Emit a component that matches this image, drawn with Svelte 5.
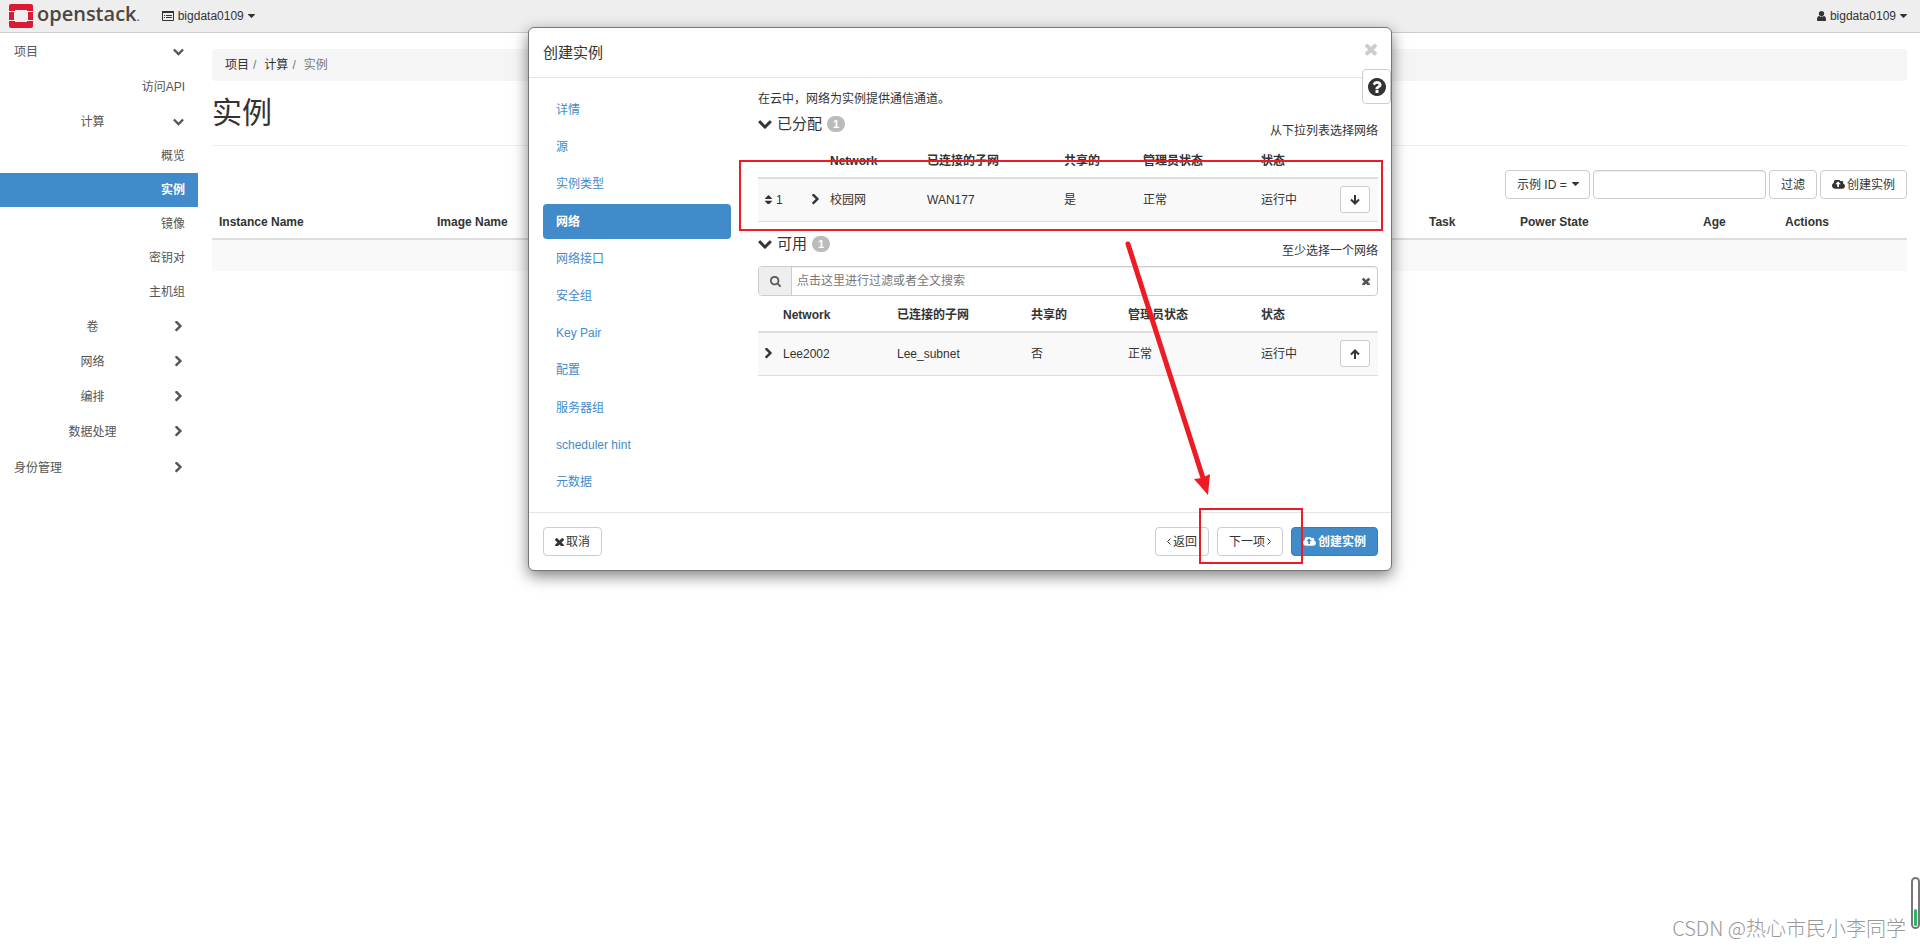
<script>
    const panels = [
        { name: '项目', kind: 'top', open: true },
        { name: '访问API', kind: 'leaf' },
        { name: '计算', kind: 'group', open: true },
        { name: '概览', kind: 'leaf' },
        { name: '实例', kind: 'leaf', active: true },
        { name: '镜像', kind: 'leaf' },
        { name: '密钥对', kind: 'leaf' },
        { name: '主机组', kind: 'leaf' },
        { name: '卷', kind: 'group' },
        { name: '网络', kind: 'group' },
        { name: '编排', kind: 'group' },
        { name: '数据处理', kind: 'group' },
        { name: '身份管理', kind: 'top' }
    ];

    const steps = ['详情', '源', '实例类型', '网络', '网络接口', '安全组', 'Key Pair', '配置', '服务器组', 'scheduler hint', '元数据'];
    let step = $state('网络');

    const columns = ['Network', '已连接的子网', '共享的', '管理员状态', '状态'];
    const allocated = [{ order: 1, cells: ['校园网', 'WAN177', '是', '正常', '运行中'] }];
    const available = [{ cells: ['Lee2002', 'Lee_subnet', '否', '正常', '运行中'] }];
    const allocatedWidths = [47, 18, 97, 137, 79, 118, 79, 45];
    const availableWidths = [18, 114, 134, 97, 133, 79, 45];

    let filter = $state('');
    let query = $state('');

    const icons = {
        down: 'M1683 808l-742 741q-19 19-45 19t-45-19l-742-741q-19-19-19-45.5t19-45.5l166-165q19-19 45-19t45 19l531 531 531-531q19-19 45-19t45 19l166 165q19 19 19 45.5t-19 45.5z',
        right: 'M1363 877l-742 742q-19 19-45 19t-45-19l-166-166q-19-19-19-45t19-45l531-531-531-531q-19-19-19-45t19-45l166-166q19-19 45-19t45 19l742 742q19 19 19 45t-19 45z',
        times: 'M1490 1322q0 40-28 68l-136 136q-28 28-68 28t-68-28l-294-294-294 294q-28 28-68 28t-68-28l-136-136q-28-28-28-68t28-68l294-294-294-294q-28-28-28-68t28-68l136-136q28-28 68-28t68 28l294 294 294-294q28-28 68-28t68 28l136 136q28 28 28 68t-28 68l-294 294 294 294q28 28 28 68z',
        caret: 'M1408 704q0 26-19 45l-448 448q-19 19-45 19t-45-19l-448-448q-19-19-19-45t19-45 45-19h896q26 0 45 19t19 45z',
        sort: 'M1408 1088q0 26-19 45l-448 448q-19 19-45 19t-45-19l-448-448q-19-19-19-45t19-45 45-19h896q26 0 45 19t19 45zm0-384q0 26-19 45t-45 19h-896q-26 0-45-19t-19-45 19-45l448-448q19-19 45-19t45 19l448 448q19 19 19 45z',
        search: 'M1216 832q0-185-131.5-316.5t-316.5-131.5-316.5 131.5-131.5 316.5 131.5 316.5 316.5 131.5 316.5-131.5 131.5-316.5zm512 832q0 52-38 90t-90 38q-54 0-90-38l-343-342q-179 124-399 124-143 0-273.5-55.5t-225-150-150-225-55.5-273.5 55.5-273.5 150-225 225-150 273.5-55.5 273.5 55.5 225 150 150 225 55.5 273.5q0 220-124 399l343 343q37 37 37 90z',
        help: 'M1024 1376v-192q0-14-9-23t-23-9h-192q-14 0-23 9t-9 23v192q0 14 9 23t23 9h192q14 0 23-9t9-23zm256-672q0-88-55.5-163t-138.5-116-170-41q-243 0-371 213-15 24 8 42l132 100q7 6 19 6 16 0 25-12 53-68 86-92 34-24 86-24 48 0 85.5 26t37.5 59q0 38-20 61t-68 45q-63 28-115.5 86.5t-52.5 125.5v36q0 14 9 23t23 9h192q14 0 23-9t9-23q0-19 21.5-49.5t54.5-49.5q32-18 49-28.5t46-35 44.5-48 28-60.5 12.5-81zm384 192q0 209-103 385.5t-279.5 279.5-385.5 103-385.5-103-279.5-279.5-103-385.5 103-385.5 279.5-279.5 385.5-103 385.5 103 279.5 279.5 103 385.5z',
        cloud: 'M1280 864q0-14-9-23l-352-352q-9-9-23-9t-23 9l-351 351q-10 12-10 24 0 14 9 23t23 9h224v352q0 13 9.500 22.500t22.500 9.500h192q13 0 22.500-9.500t9.500-22.500v-352h224q13 0 22.500-9.500t9.500-22.500zm640 288q0 159-112.500 271.500t-271.500 112.500h-1088q-185 0-316.500-131.500t-131.500-316.500q0-130 70-240t188-165q-2-30-2-43 0-212 150-362t362-150q156 0 285.500 87t188.500 231q71-62 166-62 106 0 181 75t75 181q0 76-41 138 130 31 213.500 135.500t83.500 238.500z',
        user: 'M1536 1399q0 109-62.5 187t-150.5 78h-854q-88 0-150.5-78t-62.5-187q0-85 8.5-160.5t31.5-152 58.5-131 94-89 134.5-34.5q131 128 313 128t313-128q76 0 134.5 34.5t94 89 58.5 131 31.5 152 8.5 160.5zm-256-887q0 159-112.5 271.5t-271.5 112.5-271.5-112.5-112.5-271.5 112.5-271.5 271.5-112.5 271.5 112.5 112.5 271.5z'
    };
    // [viewBox, width] of each glyph at the 12px text size
    const boxes = {
        down: ['56 256 1680 1480', 11],
        right: ['346 88 1036 1616', 7],
        times: ['302 238 1188 1316', 9],
        caret: ['384 640 1024 576', 7],
        sort: ['384 192 1024 1408', 7],
        search: ['64 128 1664 1664', 11],
        help: ['128 128 1536 1536', 18],
        cloud: ['0 256 1920 1280', 13],
        user: ['256 128 1280 1536', 9]
    };
</script>

{#snippet icon(name, size)}
    <svg class="icon" viewBox={boxes[name][0]} width={size || boxes[name][1]} aria-hidden="true"><path d={icons[name]} /></svg>
{/snippet}

{#snippet networkTable(rows, widths, ordered)}
    <table class="networks">
        <colgroup>
            {#each widths as w}<col style="width:{w}px">{/each}
        </colgroup>
        <thead>
            <tr>
                {#if ordered}<th></th>{/if}
                <th></th>
                {#each columns as column}<th>{column}</th>{/each}
                <th></th>
            </tr>
        </thead>
        <tbody>
            {#each rows as row}
                <tr>
                    {#if ordered}<td><span class="order">{@render icon('sort')}{row.order}</span></td>{/if}
                    <td class="expand">{@render icon('right')}</td>
                    {#each row.cells as cell}<td>{cell}</td>{/each}
                    <td>
                        <button class="btn move" aria-label={ordered ? 'down' : 'up'}>
                            <svg width="10" height="10" viewBox="0 0 10 10" fill="none" stroke="currentColor" stroke-width="2">
                                {#if ordered}
                                    <path d="M5 0v9M1 4.500l4 4 4-4" />
                                {:else}
                                    <path d="M5 10v-9M1 5.500l4-4 4 4" />
                                {/if}
                            </svg>
                        </button>
                    </td>
                </tr>
            {/each}
        </tbody>
    </table>
{/snippet}

<header class="topbar">
    <a class="brand" href="#home">
        <svg width="24" height="24" viewBox="0 0 24 24">
            <path fill="#da1a32" d="M2 0h20q2 0 2 2v5h-6v-1h-12v1h-6v-5q0-2 2-2zM0 8h5v8h-5zM19 8h5v8h-5zM0 17h6v1h12v-1h6v5q0 2-2 2h-20q-2 0-2-2z" />
        </svg>
        <span>openstack<small>.</small></span>
    </a>
    <button class="menu">
        <svg width="12" height="10" viewBox="0 0 12 10" fill="none" stroke="currentColor">
            <path d="M.5 1v8.500h11v-8.500M2 4.500h1M4 4.500h6M2 6.500h1M4 6.500h6" />
            <path d="M0 1h12" stroke-width="2" />
        </svg>
        bigdata0109
        {@render icon('caret')}
    </button>
    <button class="menu user">
        {@render icon('user')}
        bigdata0109
        {@render icon('caret')}
    </button>
</header>

<div class="page">
    <nav class="sidebar">
        {#each panels as panel}
            <a href="#panel" class={panel.kind} class:active={panel.active}>
                <span>{panel.name}</span>
                {#if panel.kind !== 'leaf'}
                    <i>{@render icon(panel.open ? 'down' : 'right')}</i>
                {/if}
            </a>
        {/each}
    </nav>

    <main>
        <ol class="breadcrumb">
            <li><a href="#project">项目</a></li>
            <li><a href="#compute">计算</a></li>
            <li>实例</li>
        </ol>
        <h1>实例</h1>
        <form class="actions" onsubmit={(e) => e.preventDefault()}>
            <div class="select">
                <select class="btn" aria-label="filter">
                    <option>示例 ID =</option>
                </select>
                {@render icon('caret')}
            </div>
            <input type="text" aria-label="value" bind:value={filter}>
            <button class="btn">过滤</button>
            <button class="btn" type="button">{@render icon('cloud')} 创建实例</button>
        </form>
        <table class="instances">
            <thead>
                <tr>
                    <th class="c-name">Instance Name</th>
                    <th>Image Name</th>
                    <th class="c-task">Task</th>
                    <th class="c-power">Power State</th>
                    <th class="c-age">Age</th>
                    <th class="c-actions">Actions</th>
                </tr>
            </thead>
            <tbody>
                <tr><td colspan="6"></td></tr>
            </tbody>
        </table>
    </main>
</div>

<div class="modal" role="dialog" aria-labelledby="modal-title">
    <div class="modal-header">
        <h2 id="modal-title">创建实例</h2>
        <button class="close" aria-label="close">{@render icon('times', 12)}</button>
    </div>
    <button class="btn help" aria-label="help">{@render icon('help')}</button>
    <div class="modal-body">
        <nav class="steps">
            {#each steps as name}
                <a href="#step" class:active={name === step} onclick={() => (step = name)}>{name}</a>
            {/each}
        </nav>
        <div class="content">
            <p>在云中，网络为实例提供通信通道。</p>
            <div class="title">
                <h3>{@render icon('down', 14)} 已分配 <span class="badge">1</span></h3>
                <span class="hint">从下拉列表选择网络</span>
            </div>
            {@render networkTable(allocated, allocatedWidths, true)}
            <div class="title second">
                <h3>{@render icon('down', 14)} 可用 <span class="badge">1</span></h3>
                <span class="hint">至少选择一个网络</span>
            </div>
            <div class="search">
                <label for="query">{@render icon('search')}</label>
                <input id="query" type="text" placeholder="点击这里进行过滤或者全文搜索" bind:value={query}>
                <button aria-label="clear" onclick={() => (query = '')}>{@render icon('times', 8)}</button>
            </div>
            {@render networkTable(available, availableWidths, false)}
        </div>
    </div>
    <div class="modal-footer">
        <button class="btn cancel">{@render icon('times')} 取消</button>
        <button class="btn">
            <svg width="4" height="7" viewBox="0 0 4 7" fill="none" stroke="currentColor"><path d="M3.500 .5l-3 3 3 3" /></svg>
            返回
        </button>
        <button class="btn">
            下一项
            <svg width="4" height="7" viewBox="0 0 4 7" fill="none" stroke="currentColor"><path d="M.5 .5l3 3-3 3" /></svg>
        </button>
        <button class="btn primary">{@render icon('cloud')} 创建实例</button>
    </div>

    <!-- red marks drawn over the dialog -->
    <svg class="marks" width="864" height="544" viewBox="0 0 864 544">
        <g fill="none" stroke="#ed1c24">
            <rect x="212" y="134" width="642" height="69" stroke-width="2" />
            <rect x="672" y="482" width="102" height="54" stroke-width="2" />
            <path d="M600 217L675 451" stroke-width="5" stroke-linecap="round" />
        </g>
        <path d="M680 468L666 452L674 451L682 447z" fill="#ed1c24" />
    </svg>
</div>

<div class="watermark">CSDN @热心市民小李同学</div>
<div class="meter"><span></span></div>

<style>
:global(body) {
    background: #fff;
    color: #333;
    font: 12px/18px "Liberation Sans", "Noto Sans CJK SC", sans-serif;
}
* {
    box-sizing: border-box;
}
a {
    color: #333;
    text-decoration: none;
}
button, input, select {
    font: inherit;
    color: inherit;
    margin: 0;
}
button {
    cursor: pointer;
}
.icon {
    fill: currentColor;
    flex: none;
}
.topbar {
    display: flex;
    align-items: center;
    height: 33px;
    padding: 0 13px 0 9px;
    background: #eee;
    border-bottom: 1px solid #ccc;
}
.brand {
    display: flex;
    align-items: center;
    gap: 4px;
    color: #4d4640;
    font: 600 20px/28px "Open Sans", sans-serif;
}
.brand span {
    padding-bottom: 2px;
}
.brand small {
    font-size: 12px;
    font-weight: normal;
}
.menu {
    display: flex;
    align-items: center;
    gap: 4px;
    margin-left: 22px;
    padding: 0;
    border: 0;
    background: none;
}
.menu.user {
    margin-left: auto;
}
.page {
    display: flex;
}
.sidebar {
    width: 198px;
    flex: none;
}
.sidebar a {
    display: grid;
    grid-template-columns: 1fr 14px;
    align-items: center;
    height: 35px;
    padding: 0 13px 0 14px;
    color: #555;
}
.sidebar a.top {
    height: 37px;
}
.sidebar a.leaf {
    grid-template-columns: 1fr;
    height: 34px;
    text-align: right;
}
.sidebar a.group span {
    text-align: center;
}
.sidebar i {
    display: flex;
    justify-content: center;
}
.sidebar a.active {
    background: #428bca;
    color: #fff;
    font-weight: bold;
}
main {
    flex: 1;
    min-width: 0;
    padding: 16px 13px 0 14px;
}
.breadcrumb {
    display: flex;
    margin: 0;
    padding: 7px 13px;
    list-style: none;
    background: #f5f5f5;
    border-radius: 4px;
    color: #777;
}
.breadcrumb li + li::before {
    content: "/";
    padding: 0 8px 0 4px;
    color: #777;
}
h1 {
    margin: 0;
    padding: 12px 0;
    border-bottom: 1px solid #eee;
    font-size: 30px;
    font-weight: normal;
    line-height: 40px;
}
.actions {
    display: flex;
    justify-content: flex-end;
    gap: 3px;
    margin-top: 24px;
}
.btn {
    display: inline-flex;
    align-items: center;
    justify-content: center;
    gap: 2px;
    height: 29px;
    padding: 0 11px;
    border: 1px solid #ccc;
    border-radius: 4px;
    background: #fff;
    white-space: nowrap;
}
.btn.primary {
    background: #428bca;
    border-color: #357ebd;
    color: #fff;
    font-weight: bold;
}
.select {
    position: relative;
}
.select select {
    width: 85px;
    appearance: none;
}
.select .icon {
    position: absolute;
    right: 11px;
    top: 12px;
    pointer-events: none;
}
.actions input {
    width: 173px;
    height: 29px;
    padding: 0 8px;
    border: 1px solid #ccc;
    border-radius: 4px;
    box-shadow: inset 0 1px 1px rgba(0, 0, 0, .075);
}
table {
    width: 100%;
    border-collapse: separate;
    border-spacing: 0;
    table-layout: fixed;
}
th {
    padding: 8px 7px 7px;
    border-bottom: 2px solid #ddd;
    text-align: left;
}
.instances {
    margin-top: 6px;
}
.instances td {
    height: 31px;
    background: #f9f9f9;
}
.c-name {
    width: 218px;
}
.c-task {
    width: 91px;
}
.c-power {
    width: 183px;
}
.c-age {
    width: 82px;
}
.c-actions {
    width: 129px;
}
.modal {
    position: absolute;
    top: 27px;
    left: 50%;
    width: 45%;
    min-width: 700px;
    transform: translateX(-50%);
    border: 1px solid #777;
    border-radius: 6px;
    background: #fff;
    box-shadow: 0 5px 15px rgba(0, 0, 0, .5);
}
.modal-header {
    display: flex;
    justify-content: space-between;
    padding: 14px;
    border-bottom: 1px solid #e5e5e5;
}
h2 {
    margin: 0;
    font-size: 15px;
    font-weight: normal;
    line-height: 21px;
}
.close {
    display: flex;
    height: 14px;
    padding: 0;
    border: 0;
    background: none;
    color: #ccc;
}
.help {
    position: absolute;
    top: 41px;
    right: 0;
    width: 29px;
    height: 35px;
    padding: 0;
}
.modal-body {
    display: flex;
    gap: 27px;
    min-height: 434px;
    padding: 12px 13px 13px 14px;
}
.steps {
    display: flex;
    flex-direction: column;
    justify-content: space-between;
    width: 188px;
    flex: none;
    padding-top: 2px;
}
.steps a {
    padding: 9px 13px 8px;
    border-radius: 4px;
    color: #428bca;
}
.steps a.active {
    background: #428bca;
    color: #fff;
    font-weight: bold;
}
.content {
    flex: 1;
    min-width: 0;
}
p {
    margin: 0 0 5px;
}
.title {
    display: flex;
    align-items: flex-start;
    justify-content: space-between;
    margin-bottom: 4px;
}
.title.second {
    margin: 11px 0 6px;
}
h3 {
    display: flex;
    align-items: center;
    gap: 5px;
    margin: 0;
    font-size: 15px;
    font-weight: normal;
    line-height: 22px;
}
.badge {
    width: 18px;
    border-radius: 8px;
    background: #bbb;
    color: #fff;
    font-size: 11px;
    font-weight: bold;
    line-height: 16px;
    text-align: center;
}
.hint {
    padding-top: 9px;
}
.networks td {
    padding: 7px 7px 8px;
    border-bottom: 1px solid #ddd;
    background: #f9f9f9;
}
.networks td.expand {
    padding-right: 0;
}
.expand .icon {
    display: block;
}
.order {
    display: flex;
    align-items: center;
    gap: 4px;
}
.move {
    display: flex;
    width: 30px;
    height: 27px;
    padding: 0;
    border-radius: 3px;
}
.search {
    display: flex;
    height: 30px;
    margin-bottom: 2px;
    border: 1px solid #ccc;
    border-radius: 4px;
    box-shadow: inset 0 1px 1px rgba(0, 0, 0, .075);
}
.search label {
    display: flex;
    align-items: center;
    justify-content: center;
    width: 33px;
    border-right: 1px solid #ccc;
    border-radius: 3px 0 0 3px;
    background: #eee;
    color: #555;
}
.search input {
    flex: 1;
    padding: 0 5px;
    border: 0;
    outline: 0;
    background: none;
}
.search input::placeholder {
    color: #777;
    opacity: 1;
}
.search button {
    display: flex;
    align-items: center;
    padding: 0 7px;
    border: 0;
    background: none;
    color: #555;
}
.modal-footer {
    display: flex;
    justify-content: flex-end;
    gap: 8px;
    padding: 14px 13px 14px 14px;
    border-top: 1px solid #e5e5e5;
}
.cancel {
    margin-right: auto;
}
.marks {
    position: absolute;
    top: -1px;
    left: -1px;
    pointer-events: none;
}
.watermark {
    position: absolute;
    right: 14px;
    bottom: 3px;
    color: #999;
    font: 300 20px/30px "Noto Sans CJK SC", sans-serif;
}
.meter {
    position: absolute;
    right: 0;
    bottom: 17px;
    display: flex;
    align-items: flex-end;
    width: 9px;
    height: 52px;
    padding: 1px;
    border: 2px solid #777;
    border-radius: 5px;
}
.meter span {
    width: 3px;
    height: 17px;
    border-radius: 2px;
    background: #27b765;
}
</style>
